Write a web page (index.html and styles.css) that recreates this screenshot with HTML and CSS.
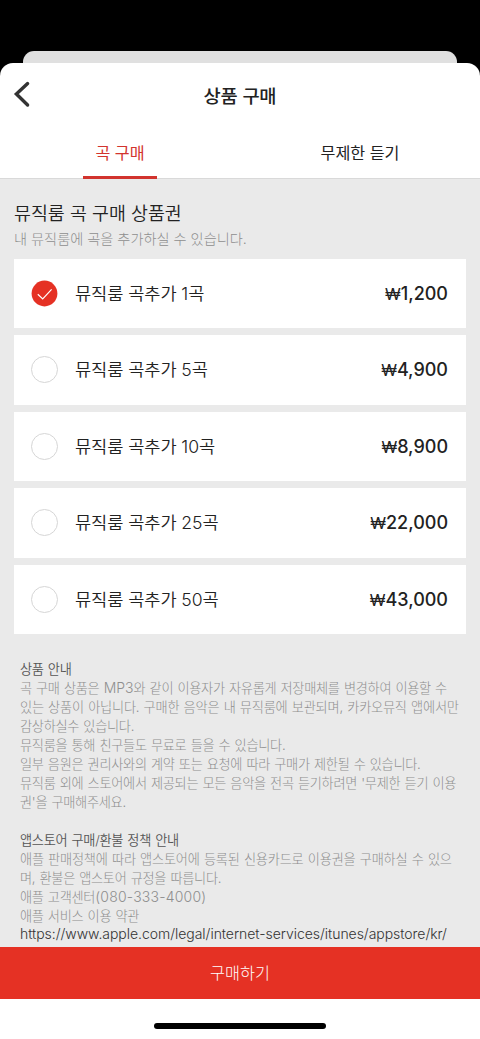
FILE: index.html
```html
<!DOCTYPE html>
<html lang="ko">
<head>
<meta charset="utf-8">
<title>상품 구매</title>
<link rel="stylesheet" href="styles.css">
</head>
<body>
<div class="screen">
  <div class="back-sheet"></div>
  <div class="sheet">
    <header class="header">
      <svg class="back" width="18" height="28" viewBox="0 0 18 28"><path d="M14.6 3.6 3.4 14 14.6 25" fill="none" stroke="#333" stroke-width="3.4" stroke-linecap="round" stroke-linejoin="miter"/></svg>
      <h1 class="title">상품 구매</h1>
    </header>
    <nav class="tabs">
      <div class="tab active"><span>곡 구매</span></div>
      <div class="tab"><span>무제한 듣기</span></div>
    </nav>
    <main class="content">
      <h2 class="section-title">뮤직룸 곡 구매 상품권</h2>
      <p class="subtitle">내 뮤직룸에 곡을 추가하실 수 있습니다.</p>
      <div class="products">
        <div class="product">
          <svg class="check" width="27" height="27" viewBox="0 0 27 27"><circle cx="13.5" cy="13.5" r="12.9" fill="#e53124"/><path d="M6.8 14.2 11.7 19 20.6 9.3" fill="none" stroke="#fff" stroke-width="1.2"/></svg>
          <span class="name">뮤직룸 곡추가 1곡</span><span class="price"><span class="won">₩</span>1,200</span>
        </div>
        <div class="product"><span class="radio"></span><span class="name">뮤직룸 곡추가 5곡</span><span class="price"><span class="won">₩</span>4,900</span></div>
        <div class="product"><span class="radio"></span><span class="name">뮤직룸 곡추가 10곡</span><span class="price"><span class="won">₩</span>8,900</span></div>
        <div class="product"><span class="radio"></span><span class="name">뮤직룸 곡추가 25곡</span><span class="price"><span class="won">₩</span>22,000</span></div>
        <div class="product"><span class="radio"></span><span class="name">뮤직룸 곡추가 50곡</span><span class="price"><span class="won">₩</span>43,000</span></div>
      </div>
      <section class="notice">
        <h3>상품 안내</h3>
        <p>곡 구매 상품은 <span class="latin">MP3</span>와 같이 이용자가 자유롭게 저장매체를 변경하여 이용할 수<br><span class="wide">있는 상품이 아닙니다. 구매한 음악은 내 뮤직룸에 보관되며, 카카오뮤직 앱에서만</span><br>감상하실수 있습니다.<br>뮤직룸을 통해 친구들도 무료로 들을 수 있습니다.<br>일부 음원은 권리사와의 계약 또는 요청에 따라 구매가 제한될 수 있습니다.<br>뮤직룸 외에 스토어에서 제공되는 모든 음악을 전곡 듣기하려면 '무제한 듣기 이용<br>권'을 구매해주세요.</p>
      </section>
      <section class="notice">
        <h3>앱스토어 구매/환불 정책 안내</h3>
        <p><span class="wide">애플 판매정책에 따라 앱스토어에 등록된 신용카드로 이용권을 구매하실 수 있으</span><br>며, 환불은 앱스토어 규정을 따릅니다.<br>애플 고객센터<span class="phone">(080-333-4000)</span><br>애플 서비스 이용 약관</p>
        <p class="link">https://www.apple.com/legal/internet-services/itunes/appstore/kr/</p>
      </section>
    </main>
    <div class="buy">구매하기</div>
    <footer class="home"><span class="home-bar"></span></footer>
  </div>
</div>
</body>
</html>
```
FILE: styles.css
```css
* { box-sizing: border-box; }
body, h1, h2, h3, p { margin: 0; }
body {
  background: #000;
  font-family: Inter, "Noto Sans CJK KR", sans-serif;
  color: #222;
}
.screen {
  width: 480px;
  height: 1039px;
  padding-top: 51px;
  display: flex;
  flex-direction: column;
  overflow: hidden;
  white-space: nowrap;
}
.back-sheet {
  flex: none;
  height: 24px;
  margin: 0 23px -12px;
  border-radius: 11px 11px 0 0;
  background: #e0e0e0;
}
.sheet {
  flex: 1;
  min-height: 0;
  display: flex;
  flex-direction: column;
  background: #fff;
  border-radius: 13px 13px 0 0;
  overflow: hidden;
}
.header {
  flex: none;
  height: 65px;
  padding-bottom: 3px;
  display: grid;
  grid-template-columns: 60px 1fr 60px;
  align-items: center;
}
.back { margin-left: 13px; }
.title {
  text-align: center;
  font-size: 18.7px;
  font-weight: 500;
  letter-spacing: -0.2px;
}
.tabs {
  flex: none;
  height: 51px;
  display: grid;
  grid-template-columns: 1fr 1fr;
  border-bottom: 1px solid #d9d9d9;
}
.tab {
  display: flex;
  justify-content: center;
  font-size: 16.2px;
  line-height: 50px;
}
.tab span { height: 51px; }
.tab.active { color: #d2342e; }
.tab.active span { width: 74px; text-align: center; border-bottom: 3px solid #d2342e; }
.content {
  flex: 1;
  min-height: 0;
  padding: 20px 14px 0;
  background: #eaeaea;
  overflow: hidden;
}
.section-title {
  font-size: 18.4px;
  line-height: 28px;
  font-weight: 350;
}
.subtitle {
  font-size: 14.2px;
  line-height: 24px;
  font-weight: 300;
  color: #8e8e8e;
}
.products {
  margin-top: 7.6px;
  display: flex;
  flex-direction: column;
  gap: 7px;
}
.product {
  height: 69.5px;
  padding: 0 18px 0 17px;
  display: flex;
  align-items: center;
  background: #fff;
}
.radio {
  width: 27px;
  height: 27px;
  border: 1px solid #d6d6d6;
  border-radius: 50%;
}
.name {
  margin-left: 17px;
  padding-bottom: 2px;
  font-size: 17.6px;
  font-weight: 350;
  letter-spacing: -0.08px;
}
.price { margin-left: auto; font-size: 18px; font-weight: 500; }
.won { font-size: 16.5px; font-weight: 400; }
.notice {
  margin: 26px 6px 0;
  font-size: 13.2px;
  line-height: 18.95px;
  letter-spacing: -0.3px;
  word-spacing: 0.8px;
  font-weight: 300;
  color: #8e8e8e;
}
.notice + .notice { margin-top: 19px; }
.notice h3 { font-size: inherit; font-weight: 350; color: #555; }
.wide { letter-spacing: -0.22px; }
.latin { font-size: 14px; letter-spacing: 0; }
.phone { font-size: 14px; letter-spacing: 0.2px; }
.link { font-size: 14px; letter-spacing: -0.04px; color: #333; }
.buy {
  flex: none;
  height: 52px;
  background: #e53124;
  color: #fff;
  font-size: 16.3px;
  font-weight: 300;
  line-height: 53px;
  text-align: center;
}
.home {
  flex: none;
  height: 40px;
  display: flex;
  justify-content: center;
  align-items: flex-start;
  padding-top: 24px;
}
.home-bar { width: 172px; height: 6px; border-radius: 3px; background: #000; }
```
